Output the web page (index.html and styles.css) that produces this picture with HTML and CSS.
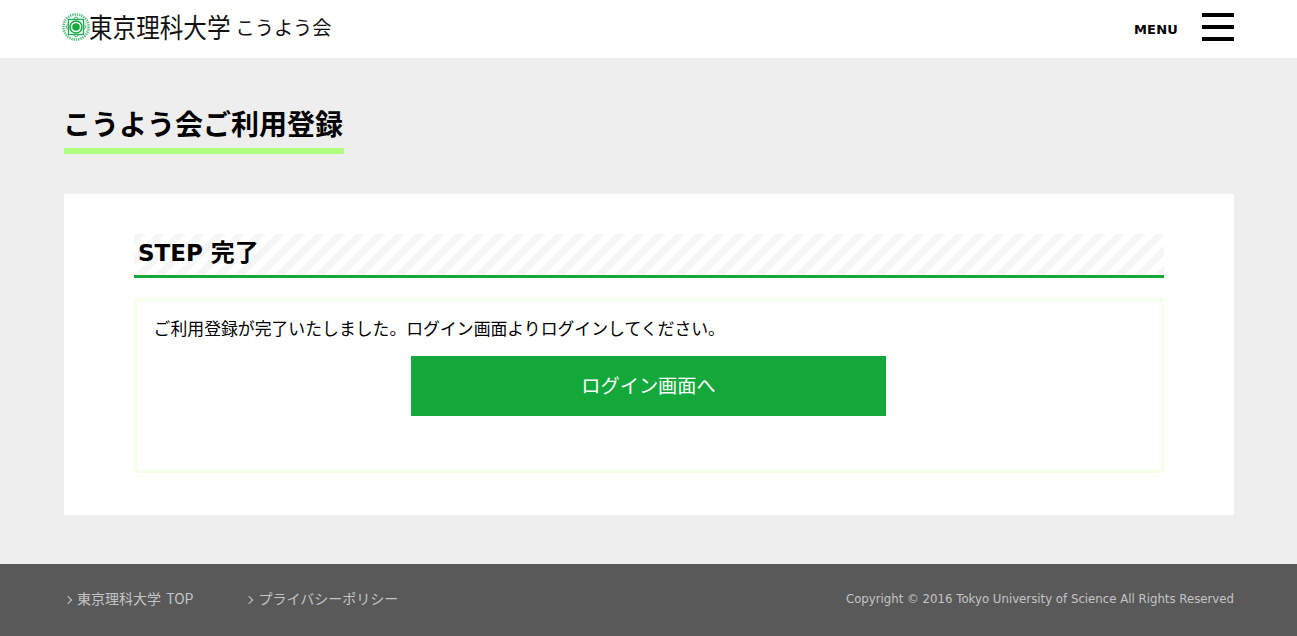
FILE: index.html
```html
<!DOCTYPE html>
<html lang="ja">
<head>
<meta charset="utf-8">
<title>こうよう会ご利用登録</title>
<link rel="stylesheet" href="styles.css">
</head>
<body>
<header class="site-header">
  <a class="logo" href="#">
    <svg class="logo-mark" viewBox="0 0 28 28" width="28" height="28" aria-hidden="true">
      <circle cx="14" cy="14" r="12.6" fill="none" stroke="#5cc287" stroke-width="2.6" stroke-dasharray="1.4 0.9"/>
      <circle cx="14" cy="14" r="10.6" fill="#dff3e6"/>
      <path d="M14 3.8 24.2 14 14 24.2 3.8 14Z" fill="none" stroke="#35b06a" stroke-width="1"/>
      <rect x="6.5" y="6.5" width="15" height="15" fill="#eef9f2" stroke="#25a95c" stroke-width="1.2"/>
      <circle cx="14" cy="14" r="6" fill="#fff" stroke="#14a83b" stroke-width="1.4"/>
      <circle cx="14" cy="14" r="3.8" fill="#14a83b"/>
    </svg>
    <span class="logo-univ">東京理科大学</span>
    <span class="logo-club">こうよう会</span>
  </a>
  <button class="menu-btn" type="button">
    <span class="menu-label">MENU</span>
    <span class="menu-bars"><i></i><i></i><i></i></span>
  </button>
</header>

<main class="main">
  <h1 class="page-title">こうよう会ご利用登録</h1>
  <section class="card">
    <h2 class="step-title">STEP <span class="step-jp">完了</span></h2>
    <div class="notice">
      <p class="notice-text">ご利用登録が完了いたしました。ログイン画面よりログインしてください。</p>
      <a class="login-btn" href="#">ログイン画面へ</a>
    </div>
  </section>
</main>

<footer class="site-footer">
  <nav class="footer-nav">
    <a href="#" class="footer-link">東京理科大学 TOP</a>
    <a href="#" class="footer-link">プライバシーポリシー</a>
  </nav>
  <small class="copyright">Copyright © 2016 Tokyo University of Science All Rights Reserved</small>
</footer>
</body>
</html>
```
FILE: styles.css
```css
* { box-sizing: border-box; }
html, body { margin: 0; padding: 0; }
body {
  background: #eee;
  color: #000;
  font-family: "DejaVu Sans", "Noto Sans CJK JP", sans-serif;
  font-size: 16px;
  height: 636px;
  overflow: hidden;
}
a { text-decoration: none; color: inherit; }

.site-header {
  height: 58px;
  background: #fff;
  display: flex;
  justify-content: space-between;
  align-items: center;
  padding: 0 63px 4px 62px;
}
.logo { display: flex; align-items: center; color: #111; }
.logo-mark { display: block; flex: none; }
.logo-univ {
  font-family: "Noto Sans CJK JP", sans-serif;
  font-size: 23.6px;
  line-height: 30px;
  font-weight: 400;
  margin-left: -1px;
  transform: scaleY(1.14);
}
.logo-club {
  font-family: "Noto Sans CJK JP", sans-serif;
  font-size: 19.2px;
  line-height: 30px;
  margin-left: 5px;
}
.menu-btn {
  display: flex;
  align-items: center;
  gap: 24px;
  padding: 0;
  border: 0;
  background: none;
  font: inherit;
  color: #000;
}
.menu-label { font-size: 13px; font-weight: 700; letter-spacing: 0.2px; position: relative; top: 2px; }
.menu-bars { display: flex; flex-direction: column; gap: 8px; width: 32px; }
.menu-bars i { display: block; height: 4px; background: #000; }

.main {
  height: 506px;
  padding: 45px 63px 0 64px;
}
.page-title {
  display: table;
  margin: 0;
  min-width: 280px;
  height: 51px;
  text-indent: -1px;
  font-family: "Noto Sans CJK JP", sans-serif;
  font-size: 28px;
  font-weight: 700;
  line-height: 40px;
  border-bottom: 6px solid #b0ff80;
}
.card {
  margin-top: 40px;
  height: 321px;
  background: #fff;
  padding: 40px 70px;
}
.step-title {
  margin: 0;
  height: 44px;
  padding-left: 4px;
  font-size: 23px;
  font-weight: 700;
  line-height: 38px;
  border-bottom: 3px solid #14a83b;
  background: repeating-linear-gradient(-45deg, #f6f6f6 0 7.07px, #fff 7.07px 14.14px);
}
.step-jp { font-size: 24px; }
.notice {
  margin-top: 20px;
  height: 175px;
  border: 3px solid #f5ffe9;
  padding: 17px 17px 0 16.6px;
}
.notice-text {
  margin: 0;
  font-size: 16.85px;
  line-height: 19px;
  font-family: "Noto Sans CJK JP", sans-serif;
}
.login-btn {
  display: flex;
  align-items: center;
  justify-content: center;
  width: 475px;
  height: 60px;
  margin: 19px 0 0 257.4px;
  padding-bottom: 2px;
  background: #14a83b;
  color: #fff;
  font-family: "Noto Sans CJK JP", sans-serif;
  font-size: 19.2px;
}

.site-footer {
  height: 72px;
  background: #595959;
  color: #c4c4c4;
  display: flex;
  justify-content: space-between;
  align-items: center;
  padding: 0 63px 3px 66px;
  font-size: 14px;
}
.footer-nav {
  display: flex;
  gap: 54px;
  margin-top: -2px;
  font-family: "Noto Sans CJK JP", sans-serif;
  word-spacing: 2px;
}
.footer-link::before {
  content: "";
  display: inline-block;
  width: 5px;
  height: 5px;
  margin: 0 6px 1px -1px;
  border-top: 1px solid #c4c4c4;
  border-right: 1px solid #c4c4c4;
  transform: rotate(45deg);
}
.copyright { font-size: 11.76px; font-family: "DejaVu Sans", sans-serif; }
```
